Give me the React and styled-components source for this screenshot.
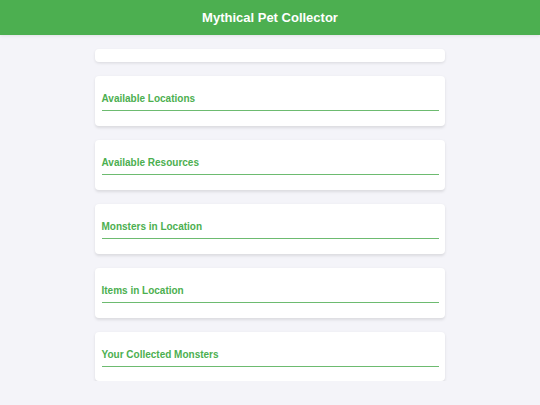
import React from "react";
import styled, { createGlobalStyle } from "styled-components";

const Global = createGlobalStyle`
  html, body { margin: 0; padding: 0; }
  body {
    background: #f4f4f9;
    font-family: "Liberation Sans", Arial, sans-serif;
  }
`;

const Header = styled.header`
  height: 35px;
  background: #4caf50;
  color: #fff;
  display: flex;
  align-items: center;
  justify-content: center;
  box-shadow: 0 1px 3px rgba(0, 0, 0, 0.08);
`;

const Title = styled.h1`
  margin: 0;
  font-size: 13px;
  font-weight: 700;
`;

const Main = styled.main`
  width: 350px;
  margin: 14px auto 0;
  display: flex;
  flex-direction: column;
  gap: 14px;
`;

const Card = styled.section`
  background: #fff;
  border-radius: 4px;
  padding: 6.5px;
  box-shadow: 0 1.3px 3px rgba(0, 0, 0, 0.1);
`;

const CardTitle = styled.h2`
  margin: 10.5px 0 8.4px;
  padding-bottom: 5.5px;
  border-bottom: 1.3px solid #6dbb70;
  color: #4caf50;
  font-size: 10px;
  font-weight: 700;
  line-height: 1.15;
`;

const sections = [
  "Available Locations",
  "Available Resources",
  "Monsters in Location",
  "Items in Location",
  "Your Collected Monsters",
];

export default function App() {
  return (
    <>
      <Global />
      <Header>
        <Title>Mythical Pet Collector</Title>
      </Header>
      <Main>
        <Card />
        {sections.map((s) => (
          <Card key={s}>
            <CardTitle>{s}</CardTitle>
          </Card>
        ))}
      </Main>
    </>
  );
}
